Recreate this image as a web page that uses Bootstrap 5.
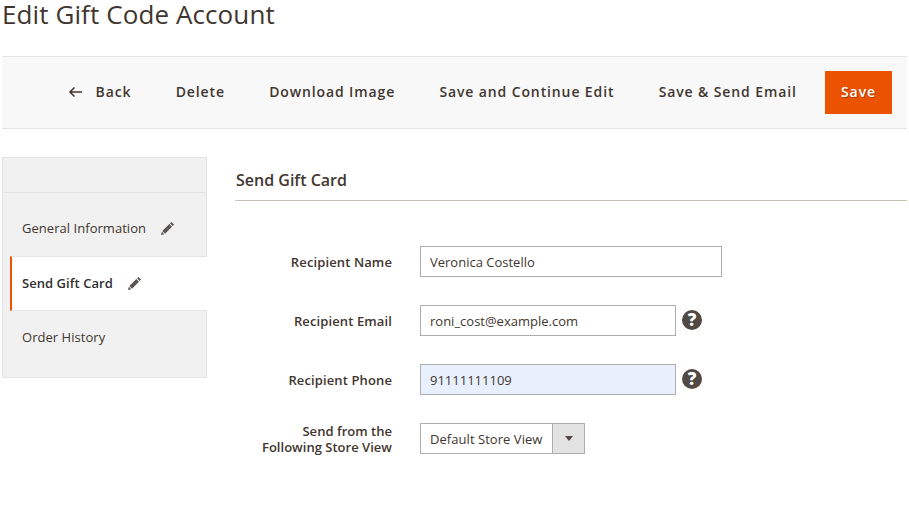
<!DOCTYPE html>
<html lang="en">
<head>
<meta charset="utf-8">
<title>Edit Gift Code Account</title>
<link href="https://cdn.jsdelivr.net/npm/bootstrap@5.3.0/dist/css/bootstrap.min.css" rel="stylesheet">
<style>
html,body{height:100%}
body{font-family:"Open Sans",sans-serif;color:#41362f;background:#fff;overflow:hidden;font-size:13px}
.shell{width:905px;margin-left:2px}
.page-heading{font-size:26px;font-weight:400;line-height:28px;margin:0;height:56px;color:#41362f;letter-spacing:.1px}
.action-bar{height:73px;background:#f8f8f8;border-top:1px solid #e3e3e3;border-bottom:1px solid #e3e3e3;padding-right:15px;gap:44.3px}
.action-link{font-size:14px;font-weight:600;letter-spacing:.88px;color:#41362f;padding:0;border:0;background:none;border-radius:0;margin-top:-2px}
.action-link:hover{color:#41362f}
.back-arrow{margin-right:13px}
.save-btn{width:67px;height:43px;background:#eb5202;color:#fff;font-size:14px;font-weight:600;letter-spacing:.9px;border:0;border-radius:0;padding:0 0 2px;text-shadow:1px 1px 1px rgba(0,0,0,.3);margin-left:-16px}
.save-btn:hover{background:#eb5202;color:#fff}
.main-area{margin-top:28px;gap:28px}
.side-tabs{width:205px;flex:none;background:#f1f1f1;border:1px solid #e3e3e3;height:221px;font-size:13px}
.tab-head{height:35px;border-bottom:1px solid #e3e3e3}
.tab-item{padding-left:19px;color:#41362f;font-size:13px;letter-spacing:.04px}
.tab-general{height:63px;padding-top:9px}
.tab-active{height:55px;background:#fff;border-top:1px solid #e3e3e3;border-bottom:1px solid #e3e3e3;font-weight:600;margin-left:7px;margin-right:-1px;padding-left:10px;border-left:2px solid #eb5202;color:#303030;letter-spacing:.05px}
.tab-order{padding-top:17px}
.pen{width:14px;height:14px;margin-left:15px;margin-top:-2px;fill:#5a5653}
.content-pane{width:672px;flex:none}
.section-title{height:44px;border-bottom:1px solid #c9c2b8;font-size:16px;font-weight:600;line-height:46px;padding-left:1px;margin-bottom:45px;color:#41362f}
.field-row{height:31px;margin-bottom:28px}
.field-label{width:157px;flex:none;text-align:right;font-weight:600;font-size:13px;line-height:16px;color:#41362f;letter-spacing:.12px}
.label-tight{letter-spacing:.02px}
.field-box{margin-left:28px}
.text-box{height:31px;border:1px solid #adadad;border-radius:0;padding:0 9px;font-size:13px;color:#41362f;box-shadow:none}
.box-wide{width:302px}
.box-mid{width:256px}
.box-filled{background:#e8f0fe}
.help-dot{width:20px;height:20px;margin-left:6px;margin-top:-1px;border-radius:50%;background:#514943;color:#fff;font-weight:800;font-size:17px;line-height:20px;text-align:center;flex:none}
.store-picker{width:165px;height:31px;border:1px solid #adadad;background:#fff;font-size:13px;color:#41362f}
.store-name{flex:1;padding-left:9px;white-space:nowrap;line-height:31px;letter-spacing:.05px}
.store-arrow{width:32px;flex:none;background:#e3e3e3;border-left:1px solid #adadad}
.store-arrow::after{content:"";border-left:4.5px solid transparent;border-right:4.5px solid transparent;border-top:5px solid #514943}
</style>
</head>
<body>
<div class="shell">
  <h1 class="page-heading">Edit Gift Code Account</h1>
  <div class="action-bar d-flex align-items-center justify-content-end">
    <a class="action-link btn d-flex align-items-center" href="#">
      <svg width="15" height="12" viewBox="0 0 15 12" class="back-arrow" aria-hidden="true"><path d="M14 6H2M6.500 1.500 2 6l4.500 4.500" fill="none" stroke="#41362f" stroke-width="1.500"/></svg>
      Back</a>
    <a class="action-link btn" href="#">Delete</a>
    <a class="action-link btn" href="#">Download Image</a>
    <a class="action-link btn" href="#">Save and Continue Edit</a>
    <a class="action-link btn" href="#">Save &amp; Send Email</a>
    <button class="save-btn btn" type="button">Save</button>
  </div>
  <div class="main-area d-flex">
    <div class="side-tabs">
      <div class="tab-head"></div>
      <div class="tab-item tab-general d-flex align-items-center">General Information
        <svg class="pen" viewBox="0 0 14 14" aria-hidden="true"><path d="M10.400.9 13.100 3.600 11.700 5 9 2.300zM8.300 3 11 5.700 4 12.700 1.300 10zM.8 10.800 3.300 13.300 0 14z"/></svg>
      </div>
      <div class="tab-item tab-active d-flex align-items-center">Send Gift Card
        <svg class="pen" viewBox="0 0 14 14" aria-hidden="true"><path d="M10.400.9 13.100 3.600 11.700 5 9 2.300zM8.300 3 11 5.700 4 12.700 1.300 10zM.8 10.800 3.300 13.300 0 14z"/></svg>
      </div>
      <div class="tab-item tab-order">Order History</div>
    </div>
    <div class="content-pane">
      <div class="section-title">Send Gift Card</div>
      <div class="field-row d-flex align-items-center">
        <label class="field-label" for="rn">Recipient Name</label>
        <div class="field-box d-flex align-items-center"><input id="rn" class="form-control text-box box-wide" value="Veronica Costello"></div>
      </div>
      <div class="field-row d-flex align-items-center">
        <label class="field-label" for="re">Recipient Email</label>
        <div class="field-box d-flex align-items-center"><input id="re" class="form-control text-box box-mid" value="roni_cost@example.com"><span class="help-dot">?</span></div>
      </div>
      <div class="field-row d-flex align-items-center">
        <label class="field-label" for="rp">Recipient Phone</label>
        <div class="field-box d-flex align-items-center"><input id="rp" class="form-control text-box box-mid box-filled" value="91111111109"><span class="help-dot">?</span></div>
      </div>
      <div class="field-row d-flex align-items-center">
        <div class="field-label label-tight">Send from the<br>Following Store View</div>
        <div class="field-box">
          <div class="store-picker d-flex"><span class="store-name">Default Store View</span><span class="store-arrow d-flex align-items-center justify-content-center"></span></div>
        </div>
      </div>
    </div>
  </div>
</div>
<script src="https://cdn.jsdelivr.net/npm/bootstrap@5.3.0/dist/js/bootstrap.bundle.min.js"></script>
</body>
</html>
